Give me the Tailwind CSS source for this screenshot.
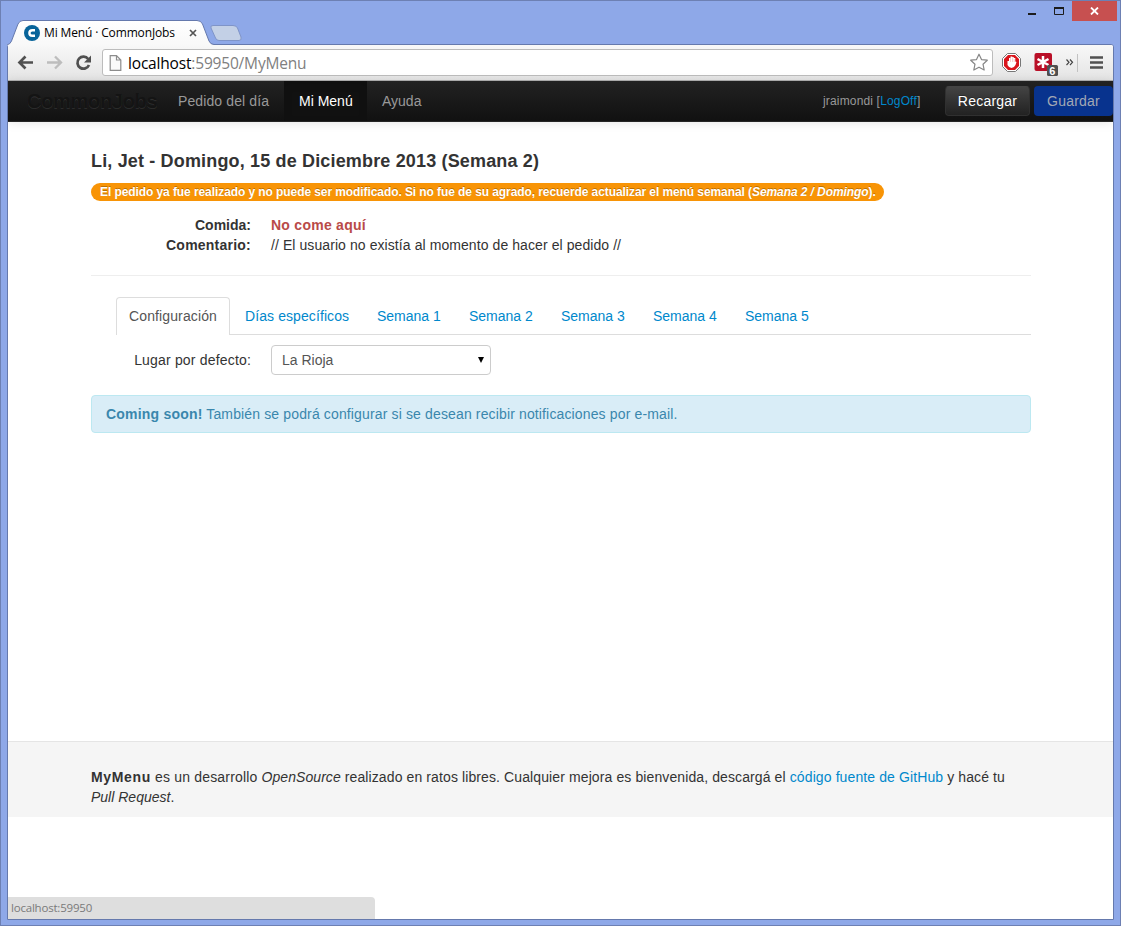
<!DOCTYPE html>
<html lang="es">
<head>
<meta charset="utf-8">
<title>Mi Menú · CommonJobs</title>
<script src="https://cdn.jsdelivr.net/npm/@tailwindcss/browser@4"></script>
</head>
<body class="w-[1121px] h-[926px] overflow-hidden font-['Liberation_Sans',Arial,sans-serif] text-sm leading-5 text-[#333]">
<div class="relative flex flex-col w-[1121px] h-[926px] bg-[#8ea8e8] border border-[#6d80b3] px-[6px] pb-[5px]">

  <!-- Title bar with tab strip -->
  <div class="relative h-[43px] shrink-0 flex justify-between">
    <svg class="absolute left-0 top-[18px] z-10" width="250" height="28" viewBox="7 19 250 28">
      <defs><linearGradient id="tab" x1="0" y1="0" x2="0" y2="1"><stop offset="0" stop-color="#fff"/><stop offset="1" stop-color="#f8f8f8"/></linearGradient></defs>
      <path d="M7 44.500 Q10.500 44 11.500 41 L18 24 Q19.500 20.500 23 20.500 H197 Q201 20.500 202.500 24 L209 41 Q210.500 44.500 214 44.500 V46 H8 Z" fill="url(#tab)"/>
      <path d="M7 45 Q10.500 44 11.500 41 L18 24 Q19.500 20.500 23 20.500 H197 Q201 20.500 202.500 24 L209 41 Q210.500 44.500 214 44.500" fill="none" stroke="#6579ad"/>
      <path d="M213 25.500 H233 Q236.500 25.500 237.500 28 L241 37 Q242 40.500 239 40.500 H219 Q216.500 40.500 215.500 38 L211 28 Q210 25.500 213 25.500Z" fill="#c3d0e6" stroke="#7f94c8"/>
    </svg>
    <div class="relative z-20 flex items-center h-[18px] mt-[23px] ml-[17px] text-black">
      <svg width="16" height="16" viewBox="0 0 16 16"><circle cx="8" cy="8" r="8" fill="#08649a"/><path d="M11 5.200H8.300Q5.400 5.200 5.400 8T8.300 10.800H11" fill="none" stroke="#fff" stroke-width="2.400"/></svg>
      <span class="ml-1 w-[145px] font-['Open_Sans'] text-[12px] leading-4 tracking-[-0.14px] whitespace-nowrap">Mi Menú · CommonJobs</span>
      <svg width="8" height="8" viewBox="0 0 8 8"><path d="M1 1L7 7M7 1L1 7" stroke="#555" stroke-width="1.700"/></svg>
    </div>
    <div class="flex h-5 mr-[-3px]">
      <svg width="44" height="20" viewBox="1028 1 44 20"><path d="M1028 13h8v2h-8z" fill="#1c1c1c"/><path d="M1054.500 8.500h9v6h-9z" fill="none" stroke="#1c1c1c"/><path d="M1054 7h10v2h-10z" fill="#1c1c1c"/></svg>
      <div class="w-[45px] h-5 bg-[#c75050] flex items-center justify-center"><svg width="9" height="8" viewBox="0 0 9 8"><path d="M1 .5L8 7.500M8 .5L1 7.500" stroke="#fff" stroke-width="1.800"/></svg></div>
    </div>
  </div>

  <!-- Browser window body -->
  <div class="flex flex-col grow min-h-0 border border-[#6579ad] rounded-t-[3px] bg-white overflow-hidden relative">
    <div class="h-9 shrink-0 flex items-center bg-linear-to-b from-[#f8f8f8] to-[#e4e4e4] border-b border-[#b0b0b0]">
      <svg class="shrink-0" width="94" height="35" viewBox="8 45 94 35">
        <g fill="none" stroke-width="2.700">
          <path d="M33 62.500H20M25.500 56.500L19.500 62.500L25.500 68.500" stroke="#505050"/>
          <path d="M47 62.500H60M55 56.500L61 62.500L55 68.500" stroke="#bdbdbd" stroke-width="2.300"/>
          <path d="M88.200 59A6 6 0 1 0 89 65" stroke="#505050"/>
        </g>
        <path d="M91 55.500V62.500H84Z" fill="#505050"/>
      </svg>
      <div class="w-[891px] h-[27px] shrink-0 flex items-center rounded-[3px] border border-[#bcbcbc] bg-white">
        <svg class="ml-[6px]" width="13" height="16" viewBox="0 0 12 16"><path d="M.7 .7H7L11.300 5V15.300H.7ZM7 .7V5H11.300" fill="#fafafa" stroke="#8c8c8c" stroke-width="1.200"/></svg>
        <span class="ml-[6px] grow font-['Open_Sans'] text-[15.500px] leading-5 tracking-[-0.18px] text-[#808080] whitespace-nowrap"><span class="text-black">localhost</span>:59950/MyMenu</span>
        <svg class="mr-[3px]" width="20" height="19" viewBox="0 0 20 19"><path d="M10 1.200L12.500 6.600L18.300 7.200L14 11.200L15.200 17L10 14.200L4.800 17L6 11.200L1.700 7.200L7.500 6.600Z" fill="#fff" stroke="#868686" stroke-width="1.200" stroke-linejoin="round"/></svg>
      </div>
      <svg class="shrink-0" width="120" height="35" viewBox="993 45 120 35">
        <path d="M1007.500 53.500H1015.500L1020.500 58.500V66.500L1015.500 71.500H1007.500L1002.500 66.500V58.500Z" fill="#fff" stroke="#777"/>
        <path d="M1008 55H1015L1019 59V66L1015 70H1008L1004 66V59Z" fill="#d9151c"/>
        <path d="M1007.500 61V65Q1009 68 1011.500 68Q1014 68 1015.500 65L1016.500 62L1015.300 61.500V58H1013.800V57H1012.300V56.500H1010.500V58H1009V61Z" fill="#fff"/>
        <path d="M1010.500 58V62M1012.500 57.500V62M1014.200 59V62" stroke="#e88" stroke-width=".4"/>
        <rect x="1034.500" y="53" width="17.500" height="18" rx="2" fill="#b90f27"/>
        <path d="M1043 56V68M1037.500 59L1048.500 65M1048.500 59L1037.500 65" stroke="#fff" stroke-width="2.500"/>
        <rect x="1047" y="65" width="11" height="11" rx="1.500" fill="#505050"/>
        <text x="1049.300" y="74.500" font-family="Liberation Sans" font-size="11" font-weight="bold" fill="#fff">6</text>
        <path d="M1066.500 59.500L1069 62.300L1066.500 65M1070 59.500L1072.500 62.300L1070 65" fill="none" stroke="#444" stroke-width="1.200"/>
        <path d="M1077.500 54V72" stroke="#c2c2c2"/>
        <path d="M1090 57.500H1103M1090 62.500H1103M1090 67.500H1103" stroke="#505050" stroke-width="2.700"/>
      </svg>
    </div>

    <!-- Application navigation -->
    <nav class="relative h-[41px] shrink-0 flex items-start bg-linear-to-b from-[#222] to-[#111] border-b border-[#252525] shadow-[0_1px_10px_rgba(0,0,0,0.1)] text-[#999] whitespace-nowrap">
      <span class="ml-[19px] mt-[10px] w-[136px] text-[20px] leading-5 tracking-[-0.3px] font-bold text-[#141414] [text-shadow:0_1px_0_rgba(255,255,255,.1)]">CommonJobs</span>
      <span class="w-[121px] px-[15px] py-[10px] tracking-[.11px]">Pedido del día</span>
      <span class="w-[83px] h-10 px-[15px] py-[10px] text-white bg-[#111] shadow-[inset_0_3px_8px_rgba(0,0,0,0.125)]">Mi Menú</span>
      <span class="px-[15px] py-[10px]">Ayuda</span>
      <span class="ml-auto mt-[10px] w-[122px] text-[12px] tracking-[.16px]">jraimondi [<span class="text-[#08c]">LogOff</span>]</span>
      <span class="mt-[5px] w-[85px] h-[30px] rounded border border-[#303030] border-t-[#444] bg-linear-to-b from-[#444] to-[#222] text-white text-center leading-7 tracking-[.22px] [text-shadow:0_-1px_0_rgba(0,0,0,.25)]">Recargar</span>
      <span class="mt-[5px] ml-1 w-[79px] h-[30px] rounded bg-[#08338e] text-[#a2a8b4] text-center leading-[30px] tracking-[.22px]">Guardar</span>
    </nav>

    <!-- Page content -->
    <main class="ml-[83px] w-[940px] h-[619px] shrink-0 pt-[29px]">
      <h1 class="text-[18px] leading-5 tracking-[.16px] font-bold whitespace-nowrap">Li, Jet - Domingo, 15 de Diciembre 2013 (Semana 2)</h1>
      <div class="mt-3 w-[793px] h-[18px] rounded-full bg-[#f89406] px-[9px] text-[12px] leading-[18px] tracking-[-0.083px] font-bold text-white whitespace-nowrap [text-shadow:0_-1px_0_rgba(0,0,0,.25)]">El pedido ya fue realizado y no puede ser modificado. Si no fue de su agrado, recuerde actualizar el menú semanal (<i>Semana 2 / Domingo</i>).</div>
      <dl class="mt-[14px] grid grid-cols-[160px_1fr] gap-x-5 whitespace-nowrap">
        <dt class="text-right font-bold">Comida:</dt><dd class="font-bold tracking-[.26px] text-[#b94a48]">No come aquí</dd>
        <dt class="text-right font-bold tracking-[.23px]">Comentario:</dt><dd class="tracking-[.08px]">// El usuario no existía al momento de hacer el pedido //</dd>
      </dl>
      <div class="mt-5 border-t border-[#eee]"></div>
      <div class="mt-[21px] ml-[25px] h-[38px] flex border-b border-[#ddd] text-[#08c] whitespace-nowrap">
        <span class="w-[114px] h-[38px] shrink-0 rounded-t border border-b-0 border-[#ddd] bg-white text-[#555] px-3 py-2 tracking-[.12px]">Configuración</span>
        <span class="ml-[15px] w-[132px] py-[9px] tracking-[.09px]">Días específicos</span>
        <span class="w-[92px] py-[9px]">Semana 1</span>
        <span class="w-[92px] py-[9px]">Semana 2</span>
        <span class="w-[92px] py-[9px]">Semana 3</span>
        <span class="w-[92px] py-[9px]">Semana 4</span>
        <span class="w-[92px] py-[9px]">Semana 5</span>
      </div>
      <div class="mt-[10px] flex items-center gap-5 h-[30px]">
        <span class="w-[160px] text-right tracking-[.18px]">Lugar por defecto:</span>
        <div class="w-[220px] h-[30px] flex items-center justify-between rounded border border-[#ccc] bg-white pl-[10px] pr-[6px] text-[#555]">La Rioja
          <svg width="6" height="6" viewBox="0 0 6 6"><path d="M0 0H6L3 6Z" fill="#000"/></svg>
        </div>
      </div>
      <div class="mt-5 h-[38px] rounded border border-[#bce8f1] bg-[#d9edf7] px-[14px] py-2 tracking-[.14px] text-[#3a87ad] whitespace-nowrap"><b class="tracking-[.2px]">Coming soon!</b> También se podrá configurar si se desean recibir notificaciones por e-mail.</div>
    </main>

    <footer class="h-[76px] shrink-0 border-t border-[#e5e5e5] bg-[#f5f5f5] pl-[83px] pt-[25px] tracking-[.107px] whitespace-nowrap">
      <b class="tracking-[.65px]">MyMenu</b> <span class="tracking-[.19px]">es un desarrollo</span> <i class="tracking-[.06px]">OpenSource</i> realizado en ratos libres. Cualquier mejora es bienvenida, descargá el <span class="text-[#08c]">código fuente de GitHub</span> y hacé tu<br><i class="tracking-normal">Pull Request</i>.
    </footer>

    <div class="mt-auto w-[367px] h-[22px] rounded-tr bg-[#dedede] pl-[3px] font-['Open_Sans'] text-[11.500px] leading-[22px] tracking-[-0.2px] text-[#7a7a7a]">localhost:59950</div>
  </div>
</div>
</body>
</html>
